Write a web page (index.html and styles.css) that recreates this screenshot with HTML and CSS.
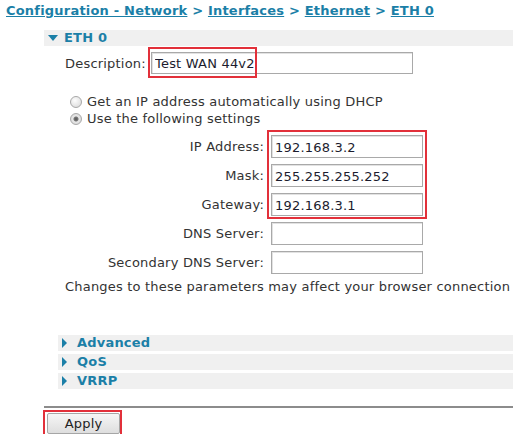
FILE: index.html
```html
<!DOCTYPE html>
<html lang="en">

<head>
  <meta charset="UTF-8">
  <title>Configuration - Network - ETH 0</title>
  <link rel="stylesheet" href="styles.css">
</head>

<body>
  <h1 class="crumbs">
    <a href="#">Configuration - Network</a> &gt; <a href="#">Interfaces</a> &gt;
    <a href="#">Ethernet</a> &gt; <a href="#">ETH 0</a>
  </h1>

  <div class="page">
    <div class="bar"><span class="tri down"></span>ETH 0</div>

    <div class="desc-row">
      <label for="desc">Description:</label>
      <span class="hold">
        <input type="text" id="desc" class="field wide" value="Test WAN 44v2">
        <span class="mark mark-desc"></span>
      </span>
    </div>

    <div class="radios">
      <label class="radio"><input type="radio" name="mode"> Get an IP address automatically using DHCP</label>
      <label class="radio"><input type="radio" name="mode" checked> Use the following settings</label>
    </div>

    <div class="settings">
      <label for="ip">IP Address:</label>
      <input type="text" id="ip" class="field" value="192.168.3.2">
      <label for="mask">Mask:</label>
      <input type="text" id="mask" class="field" value="255.255.255.252">
      <label for="gw">Gateway:</label>
      <input type="text" id="gw" class="field" value="192.168.3.1">
      <label for="dns1">DNS Server:</label>
      <input type="text" id="dns1" class="field">
      <label for="dns2">Secondary DNS Server:</label>
      <input type="text" id="dns2" class="field">
      <span class="mark mark-ip"></span>
    </div>

    <p class="note">Changes to these parameters may affect your browser connection</p>

    <div class="subs">
      <div class="bar"><span class="tri right"></span>Advanced</div>
      <div class="bar"><span class="tri right"></span>QoS</div>
      <div class="bar"><span class="tri right"></span>VRRP</div>
    </div>

    <div class="actions">
      <span class="hold">
        <button type="button" class="btn">Apply</button>
        <span class="mark mark-apply"></span>
      </span>
    </div>
  </div>
</body>

</html>
```

FILE: styles.css
```css
body {
  font-family: "DejaVu Sans", Verdana, sans-serif;
  font-size: 13px;
  letter-spacing: 0.2px;
  color: #333;
  background-color: #fff;
  margin: 0;
  padding: 0;
}

.crumbs {
  margin: 0;
  padding: 2px 6px 0;
  font-size: 13px;
  line-height: 17px;
  font-weight: bold;
  color: #1b7fa7;
}

.crumbs a {
  color: #1b7fa7;
  text-decoration: underline;
}

.page {
  margin: 11px 0 0 44px;
  width: 469px;
}

/* collapsible section headers */
.bar {
  display: flex;
  align-items: center;
  height: 16px;
  padding-left: 4px;
  background-color: #f0f0f0;
  font-weight: bold;
  color: #1b7fa7;
  line-height: 16px;
}

.tri {
  display: inline-block;
  width: 0;
  height: 0;
  margin-right: 6px;
}

.tri.down {
  border-left: 5px solid transparent;
  border-right: 5px solid transparent;
  border-top: 6px solid #1b7fa7;
}

.tri.right {
  border-top: 5px solid transparent;
  border-bottom: 5px solid transparent;
  border-left: 5px solid #1b7fa7;
  margin-right: 10px;
}

.hold {
  position: relative;
  display: inline-block;
}

.field {
  box-sizing: border-box;
  width: 152px;
  height: 23px;
  padding: 1px 3px 0;
  border: 1px solid #a9a9a9;
  box-shadow: inset 1px 1px 0 #e2e2e2;
  font-family: "DejaVu Sans", Verdana, sans-serif;
  font-size: 13px;
  letter-spacing: 0.2px;
  color: #1c1c2e;
  background: #fff;
}

.field.wide {
  width: 262px;
  height: 22px;
}

.desc-row {
  display: grid;
  grid-template-columns: 80px 262px;
  column-gap: 6px;
  align-items: center;
  margin-top: 6px;
  padding-left: 21px;
}

.desc-row label {
  white-space: nowrap;
}

.radios {
  display: flex;
  flex-direction: column;
  margin-top: 19px;
  padding-left: 26px;
}

.radio {
  display: flex;
  align-items: center;
  height: 17px;
  gap: 5px;
}

.radio input {
  appearance: none;
  box-sizing: border-box;
  width: 12px;
  height: 12px;
  margin: 0;
  border: 1px solid #a8a8a8;
  border-radius: 50%;
  background: radial-gradient(circle at 40% 35%, #fdfdfd, #d6d6d6);
}

.radio input:checked {
  background: radial-gradient(circle, #555 0, #777 2px, #e8e8e8 3px, #d0d0d0 100%);
}

.settings {
  position: relative;
  display: grid;
  grid-template-columns: 220px 152px;
  column-gap: 7px;
  row-gap: 6px;
  align-items: center;
  margin-top: 8px;
}

.settings label {
  text-align: right;
}

.note {
  margin: 5px 0 0;
  padding-left: 21px;
  line-height: 16px;
  white-space: nowrap;
}

.subs {
  display: flex;
  flex-direction: column;
  gap: 3px;
  margin: 40px 0 0 14px;
}

.actions {
  margin-top: 17px;
  padding: 5px 0 0 3px;
  border-top: 2px solid #8c8c8c;
}

.btn {
  width: 73px;
  height: 21px;
  padding: 0;
  border: 1px solid #a6a6a6;
  border-radius: 2px;
  background: linear-gradient(#f6f6f6, #dedede);
  font-family: "DejaVu Sans", Verdana, sans-serif;
  font-size: 13px;
  letter-spacing: 0.2px;
  color: #222;
}

/* red highlight frames */
.mark {
  position: absolute;
  box-sizing: border-box;
  border: 2px solid #e2303a;
  pointer-events: none;
}

.mark-desc {
  left: -3px;
  top: -5px;
  width: 109px;
  height: 31px;
}

.mark-ip {
  left: 223px;
  top: -5px;
  width: 160px;
  height: 89px;
}

.mark-apply {
  left: -4px;
  top: -3px;
  width: 79px;
  height: 28px;
}
```
